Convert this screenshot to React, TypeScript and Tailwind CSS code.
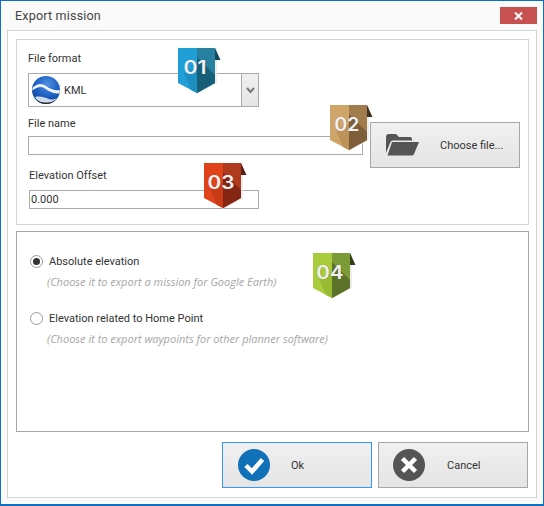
const font = { fontFamily: 'Roboto, "Open Sans", sans-serif' };
const open = { fontFamily: '"Open Sans", "Noto Sans", sans-serif' };

function Badge({ label, width, left, top, a, a2, b, c, d }: { label: string; width: number; left: number; top: number; a: string; a2: string; b: string; c: string; d: string }) {
  return (
    <svg width="46" height="50" viewBox="0 0 46 50" className="absolute" style={{ left, top }}>
      <path d="M38 1 H40 V36 L20 47 L19 46 Z" fill="#e8e8e8" opacity="0.8" />
      <path d="M38 1 L43.5 13 H38 Z" fill={d} />
      <path d="M1 1 H20 V46 L1 36 Z" fill={a} />
      <path d="M7 26 L20 20 V46 L14 43 Z" fill={a2} />
      <path d="M20 1 H38 V36 L20 46 Z" fill={b} />
      <path d="M20 10 L38 28 V36 L20 46 Z" fill={c} />
      <text x="18.6" y="27.4" textAnchor="middle" fontFamily="Inter" fontWeight="600" fontSize="18" fill="#555" opacity="0.55" textLength={width} lengthAdjust="spacingAndGlyphs">{label}</text>
      <text x="18" y="27" textAnchor="middle" fontFamily="Inter" fontWeight="600" fontSize="18" fill="#f0f0f0" textLength={width} lengthAdjust="spacingAndGlyphs">{label}</text>
    </svg>
  );
}

function Earth() {
  return (
    <svg width="30" height="30" viewBox="0 0 30 30" className="shrink-0">
      <defs>
        <radialGradient id="ge" cx="0.55" cy="0.3" r="0.75">
          <stop offset="0" stopColor="#4f8fe0" />
          <stop offset="0.6" stopColor="#1a5cc0" />
          <stop offset="1" stopColor="#123f8f" />
        </radialGradient>
      </defs>
      <circle cx="15" cy="15" r="14" fill="url(#ge)" />
      <path d="M1.5 13 C6 8 11 8 15 11 C19 14 24 16 28.7 15 C28.8 16.5 28.6 17.5 28.3 18.5 C23 19 18 16.5 14 13.5 C10 11 6 12 1.5 15.5 Z" fill="#f0f5fb" />
      <path d="M4 22 C9 21 13 22 18 24 C21 25 23.5 24.5 26 23 C24 26 20 28 15 28 C10 28 6 25.5 4 22 Z" fill="#cfdbe8" />
      <path d="M4.8 24.5 C7.5 27.5 11 29 15 29 C19 29 22.5 27.5 25.2 24.5 C22 26.8 19 27.6 15 27.6 C11 27.6 8 26.8 4.8 24.5 Z" fill="#2a2a2a" />
    </svg>
  );
}

function Folder() {
  return (
    <svg width="33" height="22" viewBox="0 0 33 22" className="shrink-0">
      <path d="M0 3 Q0 0 3 0 H10 L13 3 H24 Q26 3 26 5 V6.5 H7 Q5 6.5 4.3 8.5 L0 19 Z" fill="#555555" />
      <path d="M6 8 H33 L28 20 Q27.5 21.5 26 21.5 H1.5 Z" fill="#555555" />
    </svg>
  );
}

function Radio({ checked }: { checked?: boolean }) {
  return (
    <span className="flex h-[13px] w-[13px] shrink-0 items-center justify-center rounded-full border border-[#9a9a9a] bg-white">
      {checked && <span className="h-[7px] w-[7px] rounded-full bg-[#333333]" />}
    </span>
  );
}

export default function App() {
  return (
    <div style={font} className="relative flex h-[506px] w-[544px] flex-col border border-b-2 border-[#0f6fc0] bg-[#fafafa] text-[11px] text-[#333333]">
      <div className="flex h-[29px] shrink-0 items-start justify-between pl-[14px] pr-[6px]">
        <span className="mt-[6px] text-[12.5px] tracking-[0.2px] text-[#444444]">Export mission</span>
        <div className="mt-[6px] flex h-[17px] w-[37px] items-center justify-center bg-[#c75050]">
          <svg width="9" height="8" viewBox="0 0 9 8"><path d="M1 0.5 L8 7.5 M8 0.5 L1 7.5" stroke="#fff" strokeWidth="2" /></svg>
        </div>
      </div>
      <div className="mx-[6px] mb-[6px] flex flex-1 flex-col border border-[#d4d4d4] bg-[#ffffff] pl-[8px] pr-[7px] pt-[8px]">
        <section className="h-[186px] shrink-0 border border-[#d4d4d4] pl-[11px] pr-[7px] pt-[11px]">
          <div className="flex h-[15px] items-center pt-[2px]">File format</div>
          <div className="mt-[7px] flex h-[34px] w-[231px] border border-[#ababab]">
            <div className="flex flex-1 items-center gap-[3px] pl-[2px]"><Earth /><span className="pt-[2px]">KML</span></div>
            <div className="flex w-[17px] items-center justify-center border-l border-[#ababab] bg-gradient-to-b from-[#f0f0f0] to-[#e5e5e5]">
              <svg width="9" height="7" viewBox="0 0 9 7"><path d="M1 1 L4.5 5 L8 1" fill="none" stroke="#777" strokeWidth="2" /></svg>
            </div>
          </div>
          <div className="flex items-start gap-[7px]">
            <div className="w-[335px] shrink-0">
              <div className="mt-[9px] flex h-[15px] items-center pt-[2px]">File name</div>
              <div className="mt-[5px] h-[19px] border border-[#ababab] bg-white" />
            </div>
            <button className="mt-[15px] flex h-[46px] w-[150px] shrink-0 items-center border border-[#a6a6a6] bg-gradient-to-b from-[#f0f0f0] to-[#e5e5e5] pl-[15px]">
              <Folder />
              <span className="ml-[21px] pt-[2px]">Choose file...</span>
            </button>
          </div>
          <div className="ml-[1px] flex h-[15px] items-center pt-[2px]">Elevation Offset</div>
          <div className="ml-[1px] mt-[7px] flex h-[19px] w-[230px] items-center border border-[#ababab] bg-white pl-[1px] pt-[2px]">0.000</div>
        </section>
        <section className="mt-[6px] h-[201px] shrink-0 border border-[#a6a6a6] pl-[13px] pt-[22px]">
          <div className="flex h-[15px] items-center gap-[6px]"><Radio checked /><span className="pt-[2px]">Absolute elevation</span></div>
          <div style={open} className="ml-[17px] mt-[5px] h-[15px] text-[11px] italic leading-[15px] text-[#a6a6a6]">(Choose it to export a mission for Google Earth)</div>
          <div className="mt-[22px] flex h-[15px] items-center gap-[6px]"><Radio /><span className="pt-[2px]">Elevation related to Home Point</span></div>
          <div style={open} className="ml-[17px] mt-[5px] h-[15px] text-[11px] italic leading-[15px] text-[#a6a6a6]">(Choose it to export waypoints for other planner software)</div>
        </section>
        <div className="mt-[10px] flex justify-end gap-[6px] pr-[1px]">
          <button className="flex h-[46px] w-[150px] items-center border border-[#3399ff] bg-gradient-to-b from-[#f0f0f0] to-[#e5e5e5] pl-[15px]">
            <svg width="32" height="32" viewBox="0 0 32 32" className="shrink-0">
              <circle cx="16" cy="16" r="16" fill="#1070b8" />
              <path d="M8 16.5 L14 22.5 L24.5 10.5" fill="none" stroke="#fff" strokeWidth="4.5" />
            </svg>
            <span className="ml-[21px] pt-[2px]">Ok</span>
          </button>
          <button className="flex h-[46px] w-[150px] items-center border border-[#a6a6a6] bg-gradient-to-b from-[#f0f0f0] to-[#e5e5e5] pl-[14px]">
            <svg width="32" height="32" viewBox="0 0 32 32" className="shrink-0">
              <circle cx="16" cy="16" r="16" fill="#555555" />
              <path d="M9.5 9.5 L22.5 22.5 M22.5 9.5 L9.5 22.5" fill="none" stroke="#fff" strokeWidth="4.5" />
            </svg>
            <span className="ml-[22px] pt-[2px]">Cancel</span>
          </button>
        </div>
      </div>
      <Badge label="01" width={23} left={176} top={46} a="#1f9fd6" a2="#1c8fc0" b="#27809f" c="#175f78" d="#0f4a5e" />
      <Badge label="02" width={25} left={328} top={103} a="#cfa468" a2="#bd9258" b="#a37c4e" c="#7e5e3a" d="#3f3020" />
      <Badge label="03" width={27} left={202} top={161} a="#e0431a" a2="#c93a16" b="#b03a1c" c="#852514" d="#5a2015" />
      <Badge label="04" width={27} left={311} top={251} a="#a9cc3c" a2="#98ba34" b="#7b9b36" c="#5b7228" d="#2f3d18" />
    </div>
  );
}
